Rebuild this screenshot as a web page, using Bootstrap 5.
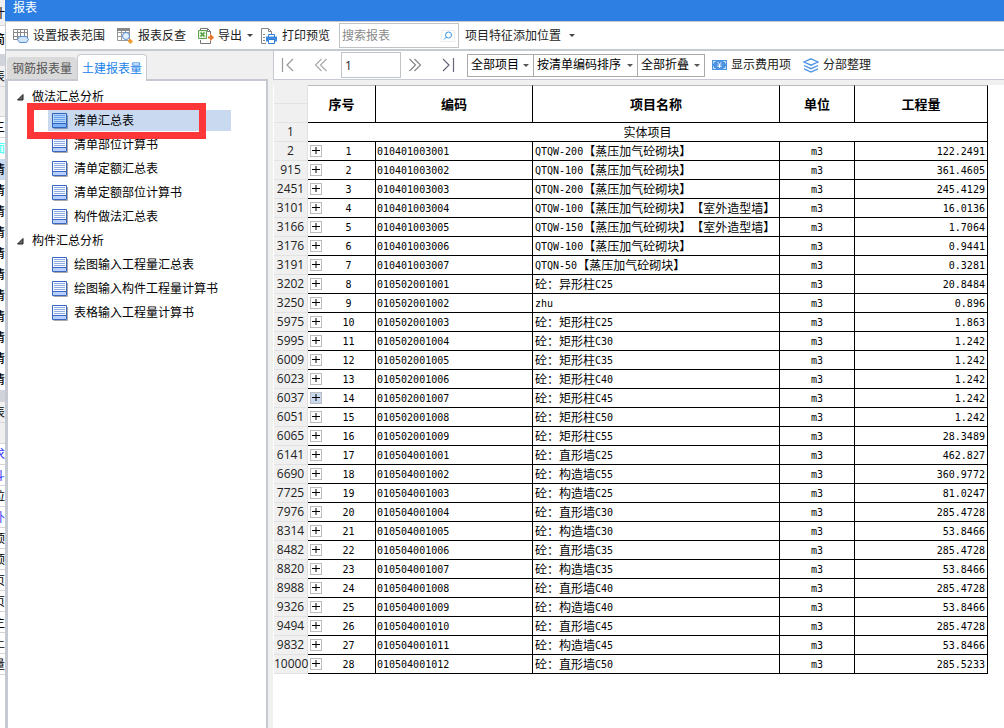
<!DOCTYPE html>
<html lang="zh-CN">
<head>
<meta charset="utf-8">
<meta name="viewport" content="width=device-width, initial-scale=1">
<title>报表</title>
<link href="https://cdn.jsdelivr.net/npm/bootstrap@5.3.0/dist/css/bootstrap.min.css" rel="stylesheet">
<style>
  :root { --ui-line: #c5c9d1; --ui-bg: #f0f0f0; --ui-blue: #2d7fe3; }
  body { font: 12px/18px "Open Sans", "Noto Sans CJK SC", sans-serif; color: #000; background: #fff; text-spacing-trim: space-all; }
  svg { display: block; flex: none; }

  /* sliver of the main window behind the report dialog */
  .behind { width: 5px; height: 100vh; overflow: hidden; flex: none; background: #fff; }
  .behind div { height: 21px; line-height: 22px; display: flex; justify-content: flex-end; border-bottom: 1px solid #d5d5d5; flex: none; }
  .behind .plain { border-color: transparent; font-weight: 500; }
  .behind .tall { height: 30px; background: var(--ui-bg); }
  .behind .band { height: 12px; background: #d0d4da; }
  .behind .soft { background: var(--ui-bg); }
  .behind .first { height: 26px; line-height: 28px; }
  .behind .second { height: 28px; line-height: 28px; }
  .behind .picked { background: #c9d9f0; }
  .behind .cyan { color: #5ff; } .behind .blue { color: #33f; }

  .titlebar { height: 21px; line-height: 16px; padding-left: 8px; background: var(--ui-blue); color: #fff; }
  .toolbar { height: 30px; border: 1px solid var(--ui-line); border-width: 1px 0 2px 1px; padding-left: 7px; background: #fff; }
  .tool { border: 0; background: none; padding: 0; display: flex; align-items: center; color: #222; white-space: nowrap; gap: 4px; }
  .caret { width: 0; border: 3px solid transparent; border-top-color: #444; border-bottom: 0; margin-left: 1px; }
  .searchbox { width: 120px; height: 25px; border: 1px solid #c0c4c9; padding: 0 3px 0 2px; margin: 0 6px 0 1px; background: #fff; }
  .searchbox input, .pageno { font-size: 12px; border: 0; border-radius: 0; padding: 0; color: #222; min-width: 0; }
  .searchbox input::placeholder { color: #8a8a8a; }
  .searchbox button { border: 1px solid #eee; background: #fff; width: 16px; height: 12px; padding: 0; display: flex; justify-content: center; align-items: center; }

  .sidebar { width: 263px; flex: none; }
  .tabs { height: 28px; padding: 3px 0 0 1px; border-left: 1px solid var(--ui-line); }
  .tabs button { border: 0; padding: 2px 4px 0; background: #dadada; color: #555; border-radius: 4px 4px 0 0; height: 22px; width: 70px; white-space: nowrap; line-height: 18px; }
  .tabs .active { background: #fff; color: #1a83ea; border: 1px solid var(--ui-line); border-bottom: 0; height: 27px; margin-bottom: -2px; position: relative; z-index: 1; }
  .treepane { border: 2px solid var(--ui-line); border-left-width: 3px; border-bottom: 0; background: #fff; padding-top: 4px; }
  .tree, .tree ul { list-style: none; margin: 0; padding: 0; }
  .tree .group { height: 24px; display: flex; align-items: center; gap: 8px; padding-left: 9px; }
  .tree .group button { border: 0; padding: 0; background: none; }
  .tree li li { height: 24px; padding: 1px 0 2px 40px; position: relative; }
  .tree a { height: 21px; width: 183px; display: flex; align-items: center; gap: 6px; padding-left: 4px; color: #000; text-decoration: none; white-space: nowrap; }
  .tree .chosen { background: #c9d9f0; }
  .marker { position: absolute; left: 19px; top: -6px; width: 179px; height: 36px; border: 7px solid #fd3737; z-index: 2; pointer-events: none; }

  .report { padding-left: 5px; background: var(--ui-bg); min-width: 0; }
  .pager { height: 29px; border: 1px solid var(--ui-line); border-width: 0 0 1px 1px; background: #fff; padding: 0 0 0 7px; }
  .pageno { width: 60px; height: 26px; border: 1px solid #c0c4c9; padding: 0 3px; margin: 0 7px 0 13px; }
  .pager select { font-size: 12px; line-height: 18px; height: 23px; width: 67px; padding: 0 12px 0 3px; margin-right: -1px; border: 1px solid #aaa; border-radius: 0; color: #000; background-size: 6px 3px; background-position: right 4px center; --bs-form-select-bg-img: url("data:image/svg+xml,%3Csvg xmlns='http://www.w3.org/2000/svg' viewBox='0 0 6 3'%3E%3Cpath d='M0 0h6L3 3z' fill='%23555'/%3E%3C/svg%3E"); }
  .pager .wide { width: 105px; } .pager .mid { width: 68px; }
  .sheetwrap { margin-top: 5px; background: #fff; padding: 0 16px 0 1px; }

  .sheet { width: 100%; table-layout: fixed; border-collapse: separate; border-spacing: 0; line-height: 16px; }
  .sheet td, .sheet th { height: 19px; padding: 0; border: 0 solid #000; border-width: 0 1px 1px 0; white-space: nowrap; text-align: center; font-weight: 400; }
  .sheet .rowno { background: var(--ui-bg); border-color: #e2e2e2; font-size: 12px; line-height: 18px; color: #222; }
  .sheet .head { font-size: 13px; font-weight: 700; border-top: 1px solid #bbb; }
  .sheet tbody td { font: 10px/14px "DejaVu Sans Mono", "Noto Sans CJK SC", monospace; padding-top: 3px; vertical-align: top; }
  .sheet tbody .section { font: 12px/16px "Noto Sans CJK SC", sans-serif; padding-top: 1px; }
  .sheet tbody .name { font: 12px/16px "Noto Sans CJK SC", sans-serif; text-align: left; padding: 1px 0 0 2px; }
  .sheet .name span { font: 10px/10px "DejaVu Sans Mono", monospace; vertical-align: 1px; }
  .sheet tbody .code { text-align: left; padding-left: 1px; }
  .sheet tbody .qty { text-align: right; padding-right: 2px; }
  .sheet tbody .seq { padding-top: 0; }
  .seq button { width: 12px; height: 12px; padding: 0; margin: 3px 0 0 2px; border: 1px solid #bcbcbc; background: #fff; flex: none; }
  .seq .hot { background: #c9d9f0; }
  .seq span { padding-top: 3px; }
</style>
</head>
<body>
<svg width="0" height="0" class="position-absolute" aria-hidden="true">
  <symbol id="doc" viewBox="0 0 16 16"><path d="M1.500 15.500h14V2" fill="none" stroke="#a9a9a9"/><path d="M.5.5h14v14H.5z" fill="#f6f9ff" stroke="#3a66c4"/><path d="M1 11h13v3H1z" fill="#b9cfff"/><path d="M2 2.500h11M2 4.500h11M2 6.500h11M2 8.500h11" stroke="#8fabe3"/><path d="M1 10.500h13" stroke="#3a66c4"/></symbol>
  <symbol id="docblue" viewBox="0 0 16 16"><path d="M1.500 15.500h14V2" fill="none" stroke="#8395b5"/><path d="M.5.5h14v14H.5z" fill="#b5d5ff" stroke="#2e62bd"/><path d="M1 11h13v3H1z" fill="#7db2fb"/><path d="M2 2.500h11M2 4.500h11M2 6.500h11M2 8.500h11" stroke="#6ba2e8"/><path d="M1 10.500h13" stroke="#2e62bd"/></symbol>
  <symbol id="tri" viewBox="0 0 7 7"><path d="M6 .5V6H.5z" fill="#666" stroke="#222"/></symbol>
  <symbol id="plus" viewBox="0 0 10 10"><path d="M1 4.500h8M5 1v7" fill="none" stroke="#000"/></symbol>
</svg>

<div class="d-flex min-vh-100">
  <div class="behind d-flex flex-column" aria-hidden="true">
    <div class="soft first">计</div><div class="plain second">简</div>
    <div class="band"></div><div class="soft">表</div><div class="tall"></div><div>三</div><div class="plain cyan">面</div>
    <div class="picked plain">清</div><div class="plain">清</div><div class="plain">清</div><div class="plain">清</div><div class="plain">清</div><div class="plain">清</div><div class="plain">清</div><div class="plain">清</div><div class="plain">清</div><div class="plain">清</div><div class="plain">清</div>
    <div class="band"></div><div class="soft">表</div><div class="soft"></div>
    <div class="blue">求</div><div class="blue">斗</div><div>垃</div><div class="blue">外</div><div>顶</div><div>顶</div><div>页</div><div>页</div><div>主</div><div>土</div><div>量</div>
  </div>

  <main class="flex-fill d-flex flex-column" style="min-width:0">
    <header class="titlebar">报表</header>
    <div class="toolbar d-flex align-items-center">
      <button class="tool me-2" type="button">
        <svg width="16" height="16" viewBox="0 0 16 16"><path d="M.5 1.500h14v10H.5zM.5 4.500h14M.5 8.500h14M4.500 1.500v10M7.500 1.500v10M11.500 1.500v10" fill="#fff" stroke="#888"/><path d="M6.500 8.500h7l2 3-2 3h-7l-2-3z" fill="#cfe3fb" stroke="#5a8fd0"/></svg>设置报表范围</button>
      <button class="tool ms-1 me-2" type="button">
        <svg width="17" height="16" viewBox="0 0 17 16"><path d="M.5.500h12v12H.5zM.5 4.500h12M.5 8.500h12M4.500.5v12M8.500.5v12" fill="#fff" stroke="#999"/><path d="M0 0h13v3H0z" fill="#888"/><circle cx="9" cy="8" r="3.500" fill="#e4f1ff" stroke="#5a8fd0"/><path d="m13 10.500 3 3-2.500 2.500-3-3z" fill="#f09a2a"/></svg>报表反查</button>
      <button class="tool ms-1 me-2" type="button">
        <svg width="16" height="16" viewBox="0 0 16 16"><path d="M2.500 2V.5h7l3 3V6M2.500 12v3.500h10V13M9.500.5v3h3" fill="none" stroke="#777"/><path d="M.5 2.500h8v8h-8z" fill="#e6f4dc" stroke="#5fa14e"/><path d="m2.500 4.500 4 4m0-4-4 4" stroke="#4b9a3a" stroke-width="1.500"/><path d="M10 8.500h2V5.500l4 4-4 4v-3h-2z" fill="#e9772b"/></svg>导出<span class="caret"></span></button>
      <button class="tool me-2" type="button">
        <svg width="17" height="16" viewBox="0 0 17 16"><path d="M5 15.500H.5V.5h7l3 3V6M7.500.5v3h3" fill="none" stroke="#888"/><path d="M2 6.500h2M2 9.500h2M2 12.500h2" stroke="#888"/><path d="M7.500 9V6.500h6V9" fill="#fff" stroke="#2f7fd6"/><path d="M5 8.500h11v5H5z" fill="#3c8ae0"/><path d="M7.500 11.500h6v4h-6z" fill="#fff" stroke="#2f7fd6"/></svg>打印预览</button>
      <div class="searchbox d-flex align-items-center">
        <input class="form-control shadow-none bg-transparent" type="text" placeholder="搜索报表" aria-label="搜索报表">
        <button type="button" aria-label="搜索"><svg width="10" height="10" viewBox="0 0 10 10"><circle cx="5.500" cy="4" r="3" fill="none" stroke="#3a93e6"/><path d="M3.500 6 1 8.500" stroke="#3a93e6"/></svg></button>
      </div>
      <button class="tool" type="button">项目特征添加位置<span class="caret ms-1"></span></button>
    </div>

    <div class="d-flex flex-fill" style="background:#f0f0f0">
      <aside class="sidebar d-flex flex-column">
        <div class="tabs d-flex align-items-end" role="tablist">
          <button type="button" role="tab">钢筋报表量</button>
          <button type="button" role="tab" class="active" aria-selected="true">土建报表量</button>
        </div>
        <nav class="treepane flex-fill">
          <ul class="tree">
            <li><div class="group"><button type="button" aria-label="折叠"><svg width="7" height="7"><use href="#tri"/></svg></button>做法汇总分析</div>
              <ul>
                <li><a href="#" class="chosen"><svg width="16" height="16"><use href="#docblue"/></svg>清单汇总表</a><div class="marker"></div></li>
                <li><a href="#"><svg width="16" height="16"><use href="#doc"/></svg>清单部位计算书</a></li>
                <li><a href="#"><svg width="16" height="16"><use href="#doc"/></svg>清单定额汇总表</a></li>
                <li><a href="#"><svg width="16" height="16"><use href="#doc"/></svg>清单定额部位计算书</a></li>
                <li><a href="#"><svg width="16" height="16"><use href="#doc"/></svg>构件做法汇总表</a></li>
              </ul></li>
            <li><div class="group"><button type="button" aria-label="折叠"><svg width="7" height="7"><use href="#tri"/></svg></button>构件汇总分析</div>
              <ul>
                <li><a href="#"><svg width="16" height="16"><use href="#doc"/></svg>绘图输入工程量汇总表</a></li>
                <li><a href="#"><svg width="16" height="16"><use href="#doc"/></svg>绘图输入构件工程量计算书</a></li>
                <li><a href="#"><svg width="16" height="16"><use href="#doc"/></svg>表格输入工程量计算书</a></li>
              </ul></li>
          </ul>
        </nav>
      </aside>

      <section class="report flex-fill d-flex flex-column">
        <div class="pager d-flex align-items-start">
          <div class="d-flex align-items-center h-100">
            <button class="tool" type="button" aria-label="首页"><svg width="13" height="14" viewBox="0 0 13 14"><path d="M1.500 0v14M12 1 6 7l6 6" fill="none" stroke="#999" stroke-width="1.200"/></svg></button>
            <button class="tool ms-3 ps-1" type="button" aria-label="上一页"><svg width="14" height="14" viewBox="0 0 14 14"><path d="M7.500 1l-6 6 6 6M12.500 1l-6 6 6 6" fill="none" stroke="#aaa" stroke-width="1.200"/></svg></button>
            <input class="form-control pageno shadow-none" type="text" value="1" aria-label="页码">
            <button class="tool" type="button" aria-label="下一页"><svg width="14" height="14" viewBox="0 0 14 14"><path d="M1.500 1l6 6-6 6M6.500 1l6 6-6 6" fill="none" stroke="#888" stroke-width="1.200"/></svg></button>
            <button class="tool ms-3 ps-1 me-2" type="button" aria-label="末页"><svg width="13" height="14" viewBox="0 0 13 14"><path d="M11.500 0v14M1 1l6 6-6 6" fill="none" stroke="#667" stroke-width="1.200"/></svg></button>
            <select class="form-select ms-1 shadow-none" aria-label="项目范围"><option>全部项目</option></select>
            <select class="form-select wide shadow-none" aria-label="排序"><option>按清单编码排序</option></select>
            <select class="form-select mid shadow-none" aria-label="折叠"><option>全部折叠</option></select>
            <button class="tool ms-1 ps-1" type="button"><svg width="15" height="10" viewBox="0 0 15 10"><path d="M0 0h15v10H0z" fill="#4a92e2"/><path d="M1.500 3.500v-2h2M11.500 1.500h2v2M1.500 6.500v2h2M11.500 8.500h2v-2M5.500 2l2 2.500 2-2.500M7.500 4.500V8M5.500 5h4M5.500 6.500h4" fill="none" stroke="#fff" stroke-width=".8"/></svg>显示费用项</button>
            <button class="tool ms-2 ps-1" type="button"><svg width="16" height="15" viewBox="0 0 16 15"><path d="m8 .8 7 3.200-7 3.200L1 4zM1 7.500l7 3.200 7-3.200M1 10.800 8 14l7-3.200" fill="none" stroke="#4a92e2" stroke-width="1.300"/></svg>分部整理</button>
          </div>
        </div>
        <div class="sheetwrap flex-fill">
          <table class="sheet">
            <colgroup><col style="width:34px"><col style="width:68px"><col style="width:157px"><col><col style="width:75px"><col style="width:133px"></colgroup>
            <thead>
              <tr><th class="rowno"></th><th class="head" rowspan="2">序号</th><th class="head" rowspan="2">编码</th><th class="head" rowspan="2">项目名称</th><th class="head" rowspan="2">单位</th><th class="head" rowspan="2">工程量</th></tr>
              <tr><th class="rowno"></th></tr>
            </thead>
            <tbody id="rows"><tr><th class="rowno">1</th><td class="section" colspan="5">实体项目</td></tr></tbody>
          </table>
        </div>
      </section>
    </div>
  </main>
</div>

<script src="https://cdn.jsdelivr.net/npm/bootstrap@5.3.0/dist/js/bootstrap.bundle.min.js"></script>
<script>
  // row number | code | item name | quantity (m3)
  const items = `2|010401003001|QTQW-200【蒸压加气砼砌块】|122.2491
915|010401003002|QTQN-100【蒸压加气砼砌块】|361.4605
2451|010401003003|QTQN-200【蒸压加气砼砌块】|245.4129
3101|010401003004|QTQW-100【蒸压加气砼砌块】【室外造型墙】|16.0136
3166|010401003005|QTQW-150【蒸压加气砼砌块】【室外造型墙】|1.7064
3176|010401003006|QTQW-100【蒸压加气砼砌块】|0.9441
3191|010401003007|QTQN-50【蒸压加气砼砌块】|0.3281
3202|010502001001|砼：异形柱C25|20.8484
3250|010502001002|zhu|0.896
5975|010502001003|砼：矩形柱C25|1.863
5995|010502001004|砼：矩形柱C30|1.242
6009|010502001005|砼：矩形柱C35|1.242
6023|010502001006|砼：矩形柱C40|1.242
6037|010502001007|砼：矩形柱C45|1.242
6051|010502001008|砼：矩形柱C50|1.242
6065|010502001009|砼：矩形柱C55|28.3489
6141|010504001001|砼：直形墙C25|462.827
6690|010504001002|砼：构造墙C55|360.9772
7725|010504001003|砼：构造墙C25|81.0247
7976|010504001004|砼：直形墙C30|285.4728
8314|010504001005|砼：构造墙C30|53.8466
8482|010504001006|砼：直形墙C35|285.4728
8820|010504001007|砼：构造墙C35|53.8466
8988|010504001008|砼：直形墙C40|285.4728
9326|010504001009|砼：构造墙C40|53.8466
9494|010504001010|砼：直形墙C45|285.4728
9832|010504001011|砼：构造墙C45|53.8466
10000|010504001012|砼：直形墙C50|285.5233`.split('\n').map(line => line.split('|'));

  document.getElementById('rows').insertAdjacentHTML('beforeend', items.map(([no, code, name, qty], i) => `
    <tr><th class="rowno">${no}</th>
      <td class="seq"><div class="d-flex align-items-start"><button type="button" aria-label="展开"${no === '6037' ? ' class="hot"' : ''}><svg width="10" height="10"><use href="#plus"/></svg></button><span class="flex-fill">${i + 1}</span></div></td>
      <td class="code">${code}</td>
      <td class="name">${name.replace(/[\w-]+/g, '<span>$&</span>')}</td>
      <td>m3</td><td class="qty">${qty}</td></tr>`).join(''));
</script>
</body>
</html>
